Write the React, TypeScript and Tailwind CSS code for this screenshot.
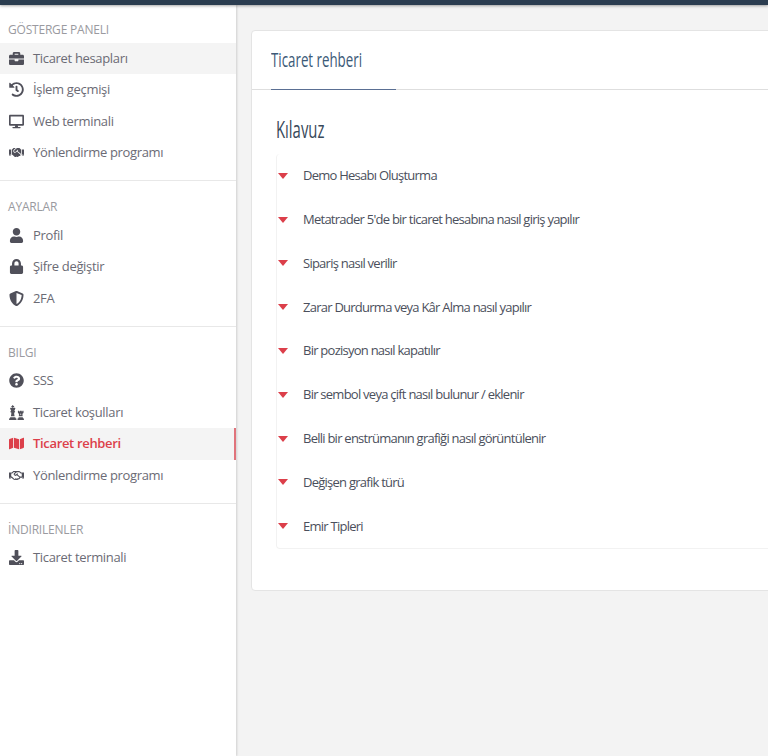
import { FaBriefcase, FaChess, FaDesktop, FaDownload, FaHandshake, FaHistory, FaLock, FaMap, FaQuestionCircle, FaRegHandshake, FaShieldAlt, FaUser } from "react-icons/fa"
import type { IconType } from "react-icons"

type NavItem = { label: string; icon: IconType; hover?: boolean; active?: boolean }

const sections: { title: string; items: NavItem[] }[] = [
  {
    title: "GÖSTERGE PANELI",
    items: [
      { label: "Ticaret hesapları", icon: FaBriefcase, hover: true },
      { label: "İşlem geçmişi", icon: FaHistory },
      { label: "Web terminali", icon: FaDesktop },
      { label: "Yönlendirme programı", icon: FaHandshake },
    ],
  },
  {
    title: "AYARLAR",
    items: [
      { label: "Profil", icon: FaUser },
      { label: "Şifre değiştir", icon: FaLock },
      { label: "2FA", icon: FaShieldAlt },
    ],
  },
  {
    title: "BILGI",
    items: [
      { label: "SSS", icon: FaQuestionCircle },
      { label: "Ticaret koşulları", icon: FaChess },
      { label: "Ticaret rehberi", icon: FaMap, active: true },
      { label: "Yönlendirme programı", icon: FaRegHandshake },
    ],
  },
  {
    title: "İNDIRILENLER",
    items: [{ label: "Ticaret terminali", icon: FaDownload }],
  },
]

const guides = [
  "Demo Hesabı Oluşturma",
  "Metatrader 5'de bir ticaret hesabına nasıl giriş yapılır",
  "Sipariş nasıl verilir",
  "Zarar Durdurma veya Kâr Alma nasıl yapılır",
  "Bir pozisyon nasıl kapatılır",
  "Bir sembol veya çift nasıl bulunur / eklenir",
  "Belli bir enstrümanın grafiği nasıl görüntülenir",
  "Değişen grafik türü",
  "Emir Tipleri",
]

function NavRow({ item }: { item: NavItem }) {
  const Icon = item.icon
  return (
    <div
      className={`flex h-[31.5px] items-center pl-[8px] text-[13px] tracking-[-0.33px] ${item.hover || item.active ? "bg-[#f4f4f4]" : ""} ${item.active ? "border-r-2 border-[#e0737b] font-semibold text-[#dc3f4a]" : "text-[#6b6b75]"}`}
    >
      <span className={`flex w-[16px] shrink-0 justify-center ${item.active ? "text-[#dc3f4a]" : "text-[#50505a]"}`}>
        <Icon className="h-[15px] w-auto shrink-0" />
      </span>
      <span className="ml-[9px]">{item.label}</span>
    </div>
  )
}

export default function App() {
  return (
    <div className="flex h-[756px] w-[768px] flex-col overflow-hidden bg-[#f3f3f3] font-['Open_Sans',sans-serif]">
      <div className="z-10 h-[5px] shrink-0 bg-[#2b3d50] shadow-[0_1px_3px_rgba(0,0,0,0.35)]" />
      <div className="flex min-h-0 flex-1">
        <aside className="w-[236px] shrink-0 bg-white shadow-[1px_0_2px_rgba(0,0,0,0.15)]">
          {sections.map((section) => (
            <div key={section.title} className="border-b border-[#e8e8e8] pt-[19px] pb-[11.5px] first:pt-[18px] last:border-b-0">
              <div className="mb-[5.5px] pl-[8px] text-[12px] leading-[14px] font-medium tracking-[-0.2px] text-[#9a9aa0]">{section.title}</div>
              {section.items.map((item) => (
                <NavRow key={item.label + item.icon.name} item={item} />
              ))}
            </div>
          ))}
        </aside>
        <main className="min-w-0 flex-1 pt-[25px] pl-[15px]">
          <div className="h-[561px] w-[560px] rounded-[4px] border border-[#e4e4e4] bg-white">
            <div className="h-[59px] border-b border-[#dedede] pl-[19px]">
              <div className="flex h-[59px] w-[125px] items-center border-b border-[#5a6f93] pb-[1px]">
                <span className="origin-left scale-x-[0.665] text-[20px] font-medium whitespace-nowrap text-[#3c5a78]">Ticaret rehberi</span>
              </div>
            </div>
            <div className="pt-[27px] pl-[24px]">
              <div className="h-[24px] origin-left scale-x-[0.62] text-[24px] leading-[24px] font-medium text-[#38495a]">Kılavuz</div>
              <div className="mt-[13px] rounded-[4px] border-b border-l border-[#f2f2f2]">
                {guides.map((guide) => (
                  <div key={guide} className="flex h-[43.8px] items-center">
                    <span className="ml-[1px] h-0 w-0 border-x-[5px] border-t-[6px] border-x-transparent border-t-[#dc3f4a]" />
                    <span className="ml-[15px] text-[13px] tracking-[-0.75px] whitespace-nowrap text-[#4b4f5c]">{guide}</span>
                  </div>
                ))}
              </div>
            </div>
          </div>
        </main>
      </div>
    </div>
  )
}
